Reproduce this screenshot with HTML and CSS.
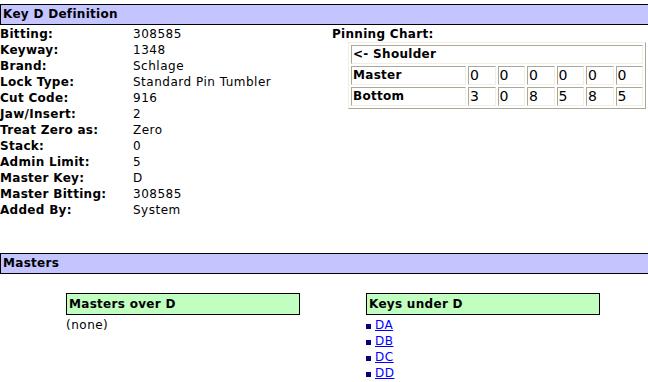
FILE: index.html
```html
<!DOCTYPE html>
<html>
<head>
<meta charset="utf-8">
<link rel="stylesheet" href="styles.css">
</head>
<body>
<div class="bar first">Key D Definition</div>
<div class="def">
  <div class="fields">
    <div class="lbl">Bitting:</div><div class="val">308585</div>
    <div class="lbl">Keyway:</div><div class="val">1348</div>
    <div class="lbl">Brand:</div><div class="val">Schlage</div>
    <div class="lbl">Lock Type:</div><div class="val">Standard Pin Tumbler</div>
    <div class="lbl">Cut Code:</div><div class="val">916</div>
    <div class="lbl">Jaw/Insert:</div><div class="val">2</div>
    <div class="lbl">Treat Zero as:</div><div class="val">Zero</div>
    <div class="lbl">Stack:</div><div class="val">0</div>
    <div class="lbl">Admin Limit:</div><div class="val">5</div>
    <div class="lbl">Master Key:</div><div class="val">D</div>
    <div class="lbl">Master Bitting:</div><div class="val">308585</div>
    <div class="lbl">Added By:</div><div class="val">System</div>
  </div>
  <div class="pin">
    <div class="lbl">Pinning Chart:</div>
    <table class="chart">
      <tr><td class="head" colspan="7">&lt;- Shoulder</td></tr>
      <tr><td class="head name">Master</td><td>0</td><td>0</td><td>0</td><td>0</td><td>0</td><td>0</td></tr>
      <tr><td class="head name">Bottom</td><td>3</td><td>0</td><td>8</td><td>5</td><td>8</td><td>5</td></tr>
    </table>
  </div>
</div>
<div class="bar second">Masters</div>
<div class="rel">
  <div class="col">
    <div class="gbox">Masters over D</div>
    <div class="none">(none)</div>
  </div>
  <div class="col">
    <div class="gbox">Keys under D</div>
    <ul class="keys">
      <li><a href="#">DA</a></li>
      <li><a href="#">DB</a></li>
      <li><a href="#">DC</a></li>
      <li><a href="#">DD</a></li>
    </ul>
  </div>
</div>
</body>
</html>
```
FILE: styles.css
```css
html, body {
  margin: 0;
  padding: 0;
  background: #ffffff;
}
body {
  font-family: "DejaVu Sans", Verdana, sans-serif;
  font-size: 12px;
  letter-spacing: 0.5px;
  line-height: 16px;
  color: #000000;
}
.bar {
  background: #c4c4ff;
  border: 1px solid #000000;
  border-right: none;
  font-weight: bold;
  letter-spacing: 0.3px;
  height: 19px;
  line-height: 19px;
  padding-left: 2px;
}
.first {
  margin-top: 4px;
}
.second {
  margin-top: 35px;
}
.def {
  display: flex;
  margin-top: 1px;
}
.fields {
  width: 332px;
  display: grid;
  grid-template-columns: 133px auto;
}
.lbl {
  font-weight: bold;
  letter-spacing: 0.3px;
}
.pin {
  flex: 1;
}
.chart {
  margin-left: 16px;
  width: 298px;
  border-collapse: separate;
  border-spacing: 2px;
  border: 1px solid;
  border-color: #f1efe2 #aca899 #aca899 #f1efe2;
}
.chart td {
  border: 1px solid;
  border-color: #aca899 #f1efe2 #f1efe2 #aca899;
  height: 17px;
  padding: 0 1px;
  font-size: 14px;
  letter-spacing: 0;
  line-height: 17px;
}
.chart td.head {
  font-size: 12px;
  font-weight: bold;
  letter-spacing: 0.3px;
}
.chart td.name {
  width: 111px;
}
.rel {
  display: flex;
  margin-top: 19px;
}
.col {
  width: 234px;
}
.col:first-child {
  margin-left: 66px;
}
.col + .col {
  margin-left: 66px;
}
.gbox {
  background: #c0ffc0;
  border: 1px solid #000000;
  font-weight: bold;
  letter-spacing: 0.3px;
  height: 20px;
  line-height: 20px;
  padding-left: 2px;
}
.none {
  margin-top: 2px;
}
.keys {
  list-style: none;
  margin: 2px 0 0 0;
  padding: 0;
}
.keys li {
  display: flex;
  align-items: center;
}
.keys li::before {
  content: "";
  width: 5px;
  height: 5px;
  background: #000080;
  margin: 3px 4px 0 0;
}
.keys a {
  color: #0000ff;
  text-decoration: underline;
}
```
